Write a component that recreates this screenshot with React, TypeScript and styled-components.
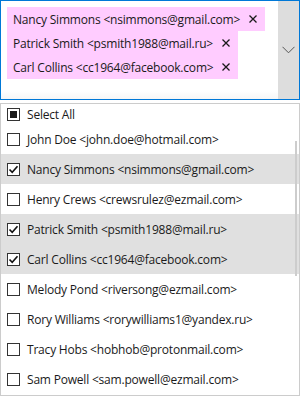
import React from "react";
import styled, { createGlobalStyle } from "styled-components";

const Global = createGlobalStyle`
  html, body { margin: 0; padding: 0; background: #ffffff; overflow: hidden; }
  body { font-family: "Segoe UI", "Open Sans", "Noto Sans", sans-serif; }
`;

const Page = styled.div`
  width: 300px;
  height: 397px;
  display: flex;
  flex-direction: column;
  gap: 3px;
  background: #fff;
`;

const Box = styled.div`
  box-sizing: border-box;
  height: 100px;
  border: 1px solid #0078d7;
  display: flex;
  background: linear-gradient(to bottom, #fff 0, #fff 90px, #f6f6f6 98px);
`;

const ChipArea = styled.div`
  flex: 1;
  padding: 6px;
  display: flex;
  flex-direction: column;
  align-items: flex-start;
`;

const Chip = styled.div`
  height: 24px;
  display: flex;
  align-items: center;
  padding: 0 8px 0 6px;
  background: #ffccff;
  font-size: 12px;
  letter-spacing: -0.2px;
  color: #1a1a1a;
  white-space: nowrap;
`;

const ChipClose = styled.svg`
  width: 8px;
  height: 8px;
  margin-left: 9px;
  flex: none;
`;

const DropButton = styled.div`
  width: 21px;
  background: #dddddd;
  display: flex;
  align-items: center;
  justify-content: center;
`;

const Popup = styled.div`
  position: relative;
  box-sizing: border-box;
  height: 293px;
  border: 1px solid #cccccc;
  display: flex;
  flex-direction: column;
  overflow: hidden;
`;

const Row = styled.div<{ $h: number; $sel?: boolean }>`
  height: ${(p) => p.$h}px;
  flex: none;
  display: flex;
  align-items: center;
  padding-left: 6px;
  gap: 7px;
  background: ${(p) => (p.$sel ? "#e0e0e0" : "transparent")};
  font-size: 12px;
  letter-spacing: -0.2px;
  color: #1a1a1a;
  white-space: nowrap;
`;

const Box13 = styled.span`
  box-sizing: border-box;
  width: 13px;
  height: 13px;
  border: 1px solid #333333;
  background: #fff;
  display: flex;
  align-items: center;
  justify-content: center;
  flex: none;
`;

const Indeterminate = styled.span`
  width: 7px;
  height: 7px;
  background: #1a1a1a;
`;

const Thumb = styled.div`
  position: absolute;
  right: 2px;
  top: 37px;
  width: 2px;
  height: 135px;
  background: #cdcdcd;
`;

const Close = () => (
  <ChipClose viewBox="0 0 8 8">
    <path d="M0.5 0.5 L7.5 7.5 M7.5 0.5 L0.5 7.5" stroke="#1a1a1a" strokeWidth="1.3" />
  </ChipClose>
);

const Check = () => (
  <svg width="11" height="11" viewBox="0 0 11 11">
    <path d="M1.5 5.5 L4.2 8.3 L9.5 2.3" fill="none" stroke="#111" strokeWidth="1.6" />
  </svg>
);

const selected = [
  "Nancy Simmons <nsimmons@gmail.com>",
  "Patrick Smith <psmith1988@mail.ru>",
  "Carl Collins <cc1964@facebook.com>",
];

const items: { text: string; checked: boolean }[] = [
  { text: "John Doe <john.doe@hotmail.com>", checked: false },
  { text: "Nancy Simmons <nsimmons@gmail.com>", checked: true },
  { text: "Henry Crews <crewsrulez@ezmail.com>", checked: false },
  { text: "Patrick Smith <psmith1988@mail.ru>", checked: true },
  { text: "Carl Collins <cc1964@facebook.com>", checked: true },
  { text: "Melody Pond <riversong@ezmail.com>", checked: false },
  { text: "Rory Williams <rorywilliams1@yandex.ru>", checked: false },
  { text: "Tracy Hobs <hobhob@protonmail.com>", checked: false },
  { text: "Sam Powell <sam.powell@ezmail.com>", checked: false },
];

export default function App() {
  return (
    <>
      <Global />
      <Page>
        <Box>
          <ChipArea>
            {selected.map((s) => (
              <Chip key={s}>
                {s}
                <Close />
              </Chip>
            ))}
          </ChipArea>
          <DropButton>
            <svg width="13" height="8" viewBox="0 0 13 8">
              <path d="M0.5 0.8 L6.5 6.8 L12.5 0.8" fill="none" stroke="#555" strokeWidth="1" />
            </svg>
          </DropButton>
        </Box>
        <Popup>
          <Row $h={20}>
            <Box13>
              <Indeterminate />
            </Box13>
            Select All
          </Row>
          {items.map((it) => (
            <Row key={it.text} $h={30} $sel={it.checked}>
              <Box13>{it.checked && <Check />}</Box13>
              {it.text}
            </Row>
          ))}
          <Thumb />
        </Popup>
      </Page>
    </>
  );
}
